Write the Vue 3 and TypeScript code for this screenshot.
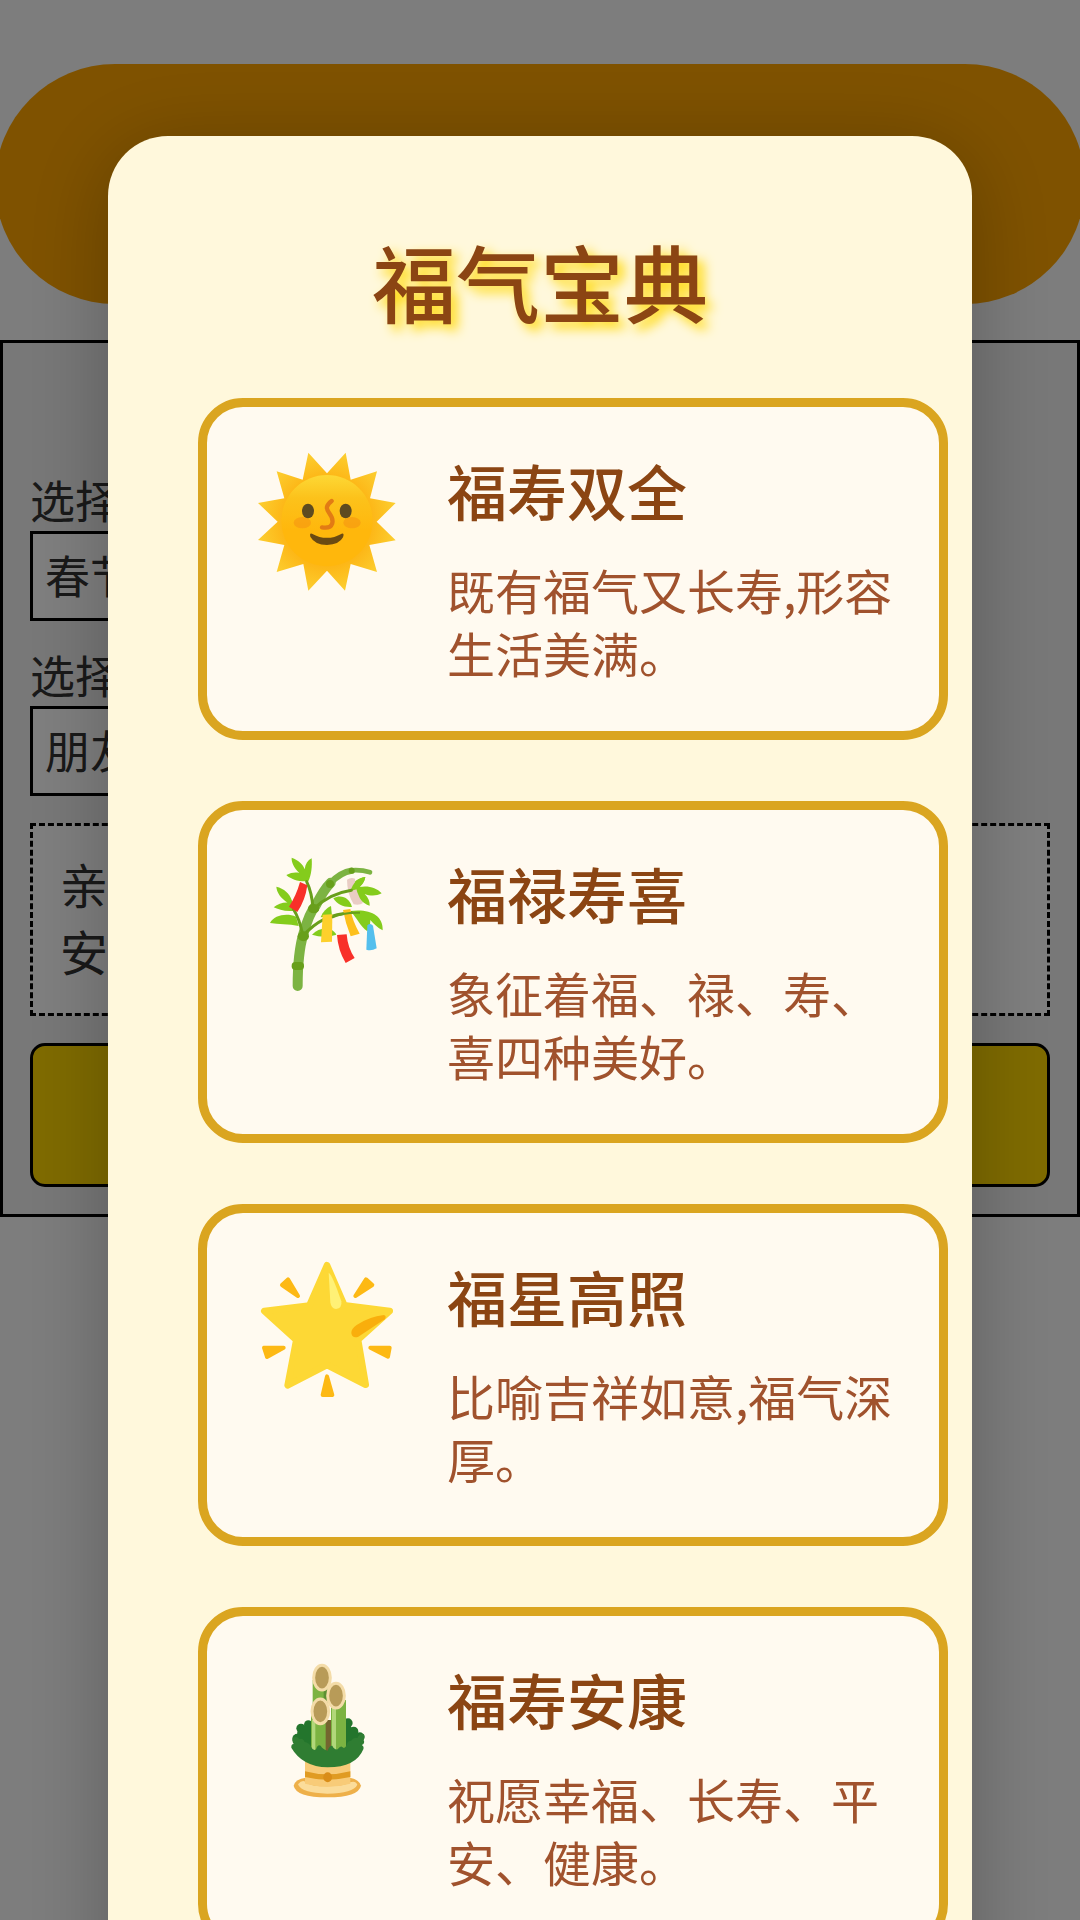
<script setup lang="ts">
interface Blessing {
  icon: 'sun' | 'bamboo' | 'star' | 'pine'
  name: string
  text: string
}

const blessings: Blessing[] = [
  { icon: 'sun', name: '福寿双全', text: '既有福气又长寿,形容生活美满。' },
  { icon: 'bamboo', name: '福禄寿喜', text: '象征着福、禄、寿、喜四种美好。' },
  { icon: 'star', name: '福星高照', text: '比喻吉祥如意,福气深厚。' },
  { icon: 'pine', name: '福寿安康', text: '祝愿幸福、长寿、平安、健康。' },
]
</script>

<template>
  <div class="page">
    <header class="banner"></header>
    <main class="panel">
      <label class="field-label" for="festival">选择</label>
      <select id="festival" class="field">
        <option>春节</option>
      </select>
      <label class="field-label" for="receiver">选择</label>
      <select id="receiver" class="field">
        <option>朋友</option>
      </select>
      <p class="message">亲<br />安</p>
      <button class="action" type="button" aria-label="福"></button>
    </main>

    <div class="overlay">
      <section class="dialog" role="dialog" aria-labelledby="dialog-title">
        <h2 id="dialog-title" class="dialog-title">福气宝典</h2>
        <ul class="list">
          <li v-for="item in blessings" :key="item.name" class="card">
            <svg v-if="item.icon === 'sun'" class="icon" viewBox="36 66 450 420" aria-hidden="true">
              <defs>
                <linearGradient id="sunFace" x1="0" y1="0" x2="0" y2="1">
                  <stop offset="0" stop-color="#fdd835" />
                  <stop offset="0.25" stop-color="#fcc21b" />
                  <stop offset="0.6" stop-color="#ffb70c" />
                  <stop offset="1" stop-color="#ffb70c" />
                </linearGradient>
                <radialGradient id="sunRays" gradientUnits="userSpaceOnUse" cx="261" cy="275" r="215">
                  <stop offset="0.6" stop-color="#fdb515" />
                  <stop offset="1" stop-color="#fccf31" />
                </radialGradient>
              </defs>
              <path fill="url(#sunRays)" d="M205 68 261 130 317 68 332 149 411 124 390 205 467 219 410 275 467 331 388 345 411 426 332 402 315 482 261 422 205 482 190 402 110 426 133 345 54 330 113 275 54 219 133 205 110 124 188 149Z" />
              <circle cx="261" cy="272" r="137" fill="url(#sunFace)" />
              <ellipse cx="187" cy="278" rx="26" ry="17" fill="#f79c12" opacity=".75" />
              <ellipse cx="336" cy="278" rx="26" ry="17" fill="#f79c12" opacity=".75" />
              <ellipse cx="204" cy="243" rx="18" ry="22" fill="#5d4a20" />
              <ellipse cx="317" cy="243" rx="18" ry="22" fill="#5d4a20" />
              <path d="M275 213C258 226 257 235 268 250C283 270 283 298 246 292" fill="none" stroke="#e27b14" stroke-width="13" stroke-linecap="round" />
              <path d="M216 311Q261 336 305 311Q314 309 309 322Q298 344 261 345Q224 344 211 320Q208 308 216 311Z" fill="#6b4a12" />
            </svg>

            <svg v-else-if="item.icon === 'bamboo'" class="icon" viewBox="36 45 450 420" aria-hidden="true">
              <g fill="#84cc1c">
                <path d="M188 124C163 122 146 112 139 105C153 98 166 96 178 99C161 82 154 66 155 53C176 61 189 73 194 88C196 72 203 61 215 55C217 80 214 106 205 124Z" />
                <path d="M154 213C132 214 113 208 101 202C113 192 129 187 143 188C122 174 110 157 109 140C132 146 149 160 155 180L168 212Z" />
                <path d="M176 258C146 252 115 253 90 249C102 226 139 218 168 230Z" />
                <path d="M280 175C304 162 328 173 336 201C312 203 291 193 280 175Z" />
                <path d="M216 284C238 260 276 258 289 284C265 292 239 291 216 284Z" />
                <path d="M242 232C249 214 260 204 273 198L276 228Z" />
                <path d="M328 154C335 128 352 114 376 111C374 124 367 134 357 141C384 136 409 142 425 160C408 169 391 168 374 162C385 173 390 185 389 197C368 190 352 173 345 156Z" />
                <path d="M330 213C386 205 431 224 428 271C413 264 400 250 391 240C391 254 388 266 382 274C360 259 354 236 330 213Z" />
              </g>
              <path d="M321 119Q333 111 345 116Q346 158 369 189Q359 197 341 193Q321 160 321 119Z" fill="#e9cdc4" />
              <path d="M332 153C338 128 354 114 376 111C374 126 365 138 350 148Z" fill="#84cc1c" />
              <path d="M173 438Q173 340 190 282Q207 220 228 195Q251 149 272 128" fill="none" stroke="#7cb342" stroke-width="30" stroke-linecap="round" />
              <path d="M270 130Q302 97 335 92" fill="none" stroke="#7cb342" stroke-width="19" stroke-linecap="round" />
              <path d="M335 91Q365 89 390 97" fill="none" stroke="#7cb342" stroke-width="14" stroke-linecap="round" />
              <g fill="none" stroke="#689f1b" stroke-width="9" stroke-linecap="round">
                <path d="M219 206Q216 158 200 125" />
                <path d="M222 206Q269 161 334 151" />
                <path d="M188 284Q178 235 160 207" />
                <path d="M190 287Q245 222 334 218" />
              </g>
              <g fill="#689f1b">
                <rect x="155" y="366" width="37" height="24" rx="11" />
                <ellipse cx="190" cy="289" rx="17" ry="15" />
                <ellipse cx="221" cy="206" rx="17" ry="14" />
                <circle cx="270" cy="132" r="12" />
                <circle cx="335" cy="92" r="9" />
              </g>
              <path d="M180 126 202 136Q196 181 172 216L147 200Q169 166 180 126Z" fill="#f83029" />
              <path d="M248 224 277 223 276 305 243 307Z" fill="#fdd02c" />
              <path d="M309 210 331 207Q337 242 359 281L332 289Q316 249 309 210Z" fill="#fdc01c" />
              <path d="M291 285 320 283Q323 323 344 354L317 369Q294 331 291 285Z" fill="#f83029" />
              <path d="M382 256Q391 248 399 257L410 325Q394 334 379 329Z" fill="#54bfed" />
              <path d="M276 233Q305 217 360 218" fill="none" stroke="#689f1b" stroke-width="6" />
            </svg>

            <svg v-else-if="item.icon === 'star'" class="icon" viewBox="36 54 450 420" aria-hidden="true">
              <path d="M261 76 313 196 449 213 354 299 377 434 261 375 143 436 169 300 73 213 208 197Z" fill="#fdd835" stroke="#fdd835" stroke-width="20" stroke-linejoin="round" />
              <path d="M266 98Q277 104 304 184Q307 205 288 207Q274 207 271 187Z" fill="#fff176" />
              <path d="M432 225Q441 229 434 238L355 290Q337 297 334 279Q333 267 350 255Q387 230 432 225Z" fill="#f9ae0c" />
              <g fill="#fdb914" stroke="#fdb914" stroke-width="12" stroke-linejoin="round">
                <path d="M126 135 144 118 174 168Z" />
                <path d="M378 118 397 135 346 168Z" />
                <path d="M72 323 131 323 81 351Z" />
                <path d="M391 323 449 323 444 350Z" />
                <path d="M261 409 277 465 248 465Z" />
              </g>
            </svg>

            <svg v-else class="icon" viewBox="36 63 450 420" aria-hidden="true">
              <g fill="#23752c">
                <circle cx="183" cy="265" r="14" />
                <circle cx="205" cy="254" r="13" />
                <circle cx="324" cy="249" r="14" />
                <circle cx="341" cy="274" r="14" />
                <circle cx="359" cy="291" r="14" />
                <circle cx="172" cy="296" r="15" />
                <path d="M167 330 172 275 205 250H324L345 275 365 300 340 359H190Z" />
              </g>
              <path d="M218 120H257V300H218Z" fill="#7cb342" />
              <path d="M251 140H263V230H251Z" fill="#5d8f33" />
              <path d="M213 222H260V340H213Z" fill="#7cb342" />
              <path d="M216 240H226V330H216Z" fill="#b1d77a" />
              <path d="M257 240H276V340H257Z" fill="#74652f" />
              <path d="M273 180H318V340H273Z" fill="#7cb342" />
              <path d="M276 200H288V330H276Z" fill="#b1d77a" />
              <g fill="#b89b58" stroke="#f4dca8" stroke-width="9">
                <ellipse cx="246" cy="113" rx="25" ry="37" />
                <ellipse cx="288" cy="167" rx="25" ry="37" />
                <ellipse cx="241" cy="214" rx="25" ry="37" />
              </g>
              <path d="M161 437Q166 418 194 414H332Q357 419 363 437Q355 472 262 472Q168 472 161 437Z" fill="#eeb04a" />
              <path d="M174 433Q188 416 200 428Q212 439 262 439Q315 439 330 427Q347 421 352 434Q340 460 262 461Q184 460 174 433Z" fill="#fbdc9a" />
              <path d="M195 365H331V431Q261 449 195 431Z" fill="#f8cb78" />
              <path d="M195 394Q261 412 331 394V411Q261 427 195 411Z" fill="#e09b22" />
              <ellipse cx="263" cy="412" rx="13" ry="15" fill="#d98d18" />
              <path d="M154 323Q153 312 161 312Q154 300 160 293Q170 287 178 297Q189 294 194 306Q207 308 213 320Q220 334 228 328Q233 312 242 317Q248 328 263 332Q268 316 277 317Q283 330 293 328Q302 315 308 322Q315 328 320 314Q323 302 333 302Q342 290 352 294Q359 278 371 282Q377 289 371 300Q376 311 365 315Q373 319 370 328Q348 382 263 382Q187 380 154 323Z" fill="#2f7d32" />
            </svg>

            <div class="card-body">
              <h3 class="card-title">{{ item.name }}</h3>
              <p class="card-text">{{ item.text }}</p>
            </div>
          </li>
        </ul>
      </section>
    </div>
  </div>
</template>

<style>
body {
  background: #fafafa;
}
</style>

<style scoped>
.page {
  box-sizing: border-box;
  min-height: 100vh;
  padding-top: 64px;
  overflow: hidden;
  color: #333;
  font-family: "Noto Sans CJK SC", sans-serif;
}

.banner {
  height: 240px;
  margin: 0 -5px 36px;
  border-radius: 120px;
  background: #ffa500;
}

.panel {
  display: flex;
  flex-direction: column;
  align-items: stretch;
  padding: 130px 27px 27px;
  border: 3px solid #000;
  background: #f0f0f0;
}

.field-label {
  margin-bottom: 5px;
  font-size: 45px;
  line-height: 53px;
}

.field {
  appearance: none;
  align-self: flex-start;
  box-sizing: border-box;
  width: 50%;
  height: 90px;
  margin-bottom: 27px;
  padding: 0 12px 4px;
  border: 3px solid #000;
  border-radius: 0;
  background: #fff;
  color: #333;
  font-family: inherit;
  font-size: 45px;
}

.message {
  margin: 0 0 27px;
  padding: 24px 27px 29px;
  border: 3px dashed #000;
  background: #fff;
  font-size: 48px;
  line-height: 67px;
}

.action {
  height: 144px;
  border: 3px solid #000;
  border-radius: 15px;
  background: #ffd700;
}

.overlay {
  position: fixed;
  inset: 0;
  overflow: hidden;
  background: rgba(0, 0, 0, 0.5);
}

.dialog {
  width: 80%;
  margin: 136px auto 0;
  padding: 90px 0;
  box-sizing: border-box;
  border-radius: 60px;
  background: #fff8dc;
  box-shadow: 0 12px 84px rgba(0, 0, 0, 0.25);
}

.dialog-title {
  margin: 0 0 62px;
  color: #8b4513;
  font-size: 84px;
  font-weight: 500;
  line-height: 110px;
  text-align: center;
  text-shadow: 6px 6px 12px #ffd700;
}

.list {
  display: flex;
  flex-direction: column;
  gap: 61px;
  margin: 0;
  padding: 0 24px 0 90px;
  list-style: none;
}

.card {
  display: flex;
  align-items: flex-start;
  gap: 45px;
  padding: 45px;
  border: 9px solid #daa520;
  border-radius: 45px;
  background: #fffaf0;
}

.icon {
  flex: none;
  width: 150px;
  height: 140px;
}

.card-body {
  flex: 1;
  min-width: 0;
  padding-bottom: 2px;
}

.card-title {
  margin: 0 0 30px;
  color: #8b4513;
  font-size: 60px;
  font-weight: 500;
  line-height: 76px;
}

.card-text {
  margin: 0;
  color: #a0522d;
  font-size: 48px;
  line-height: 63px;
}
</style>
